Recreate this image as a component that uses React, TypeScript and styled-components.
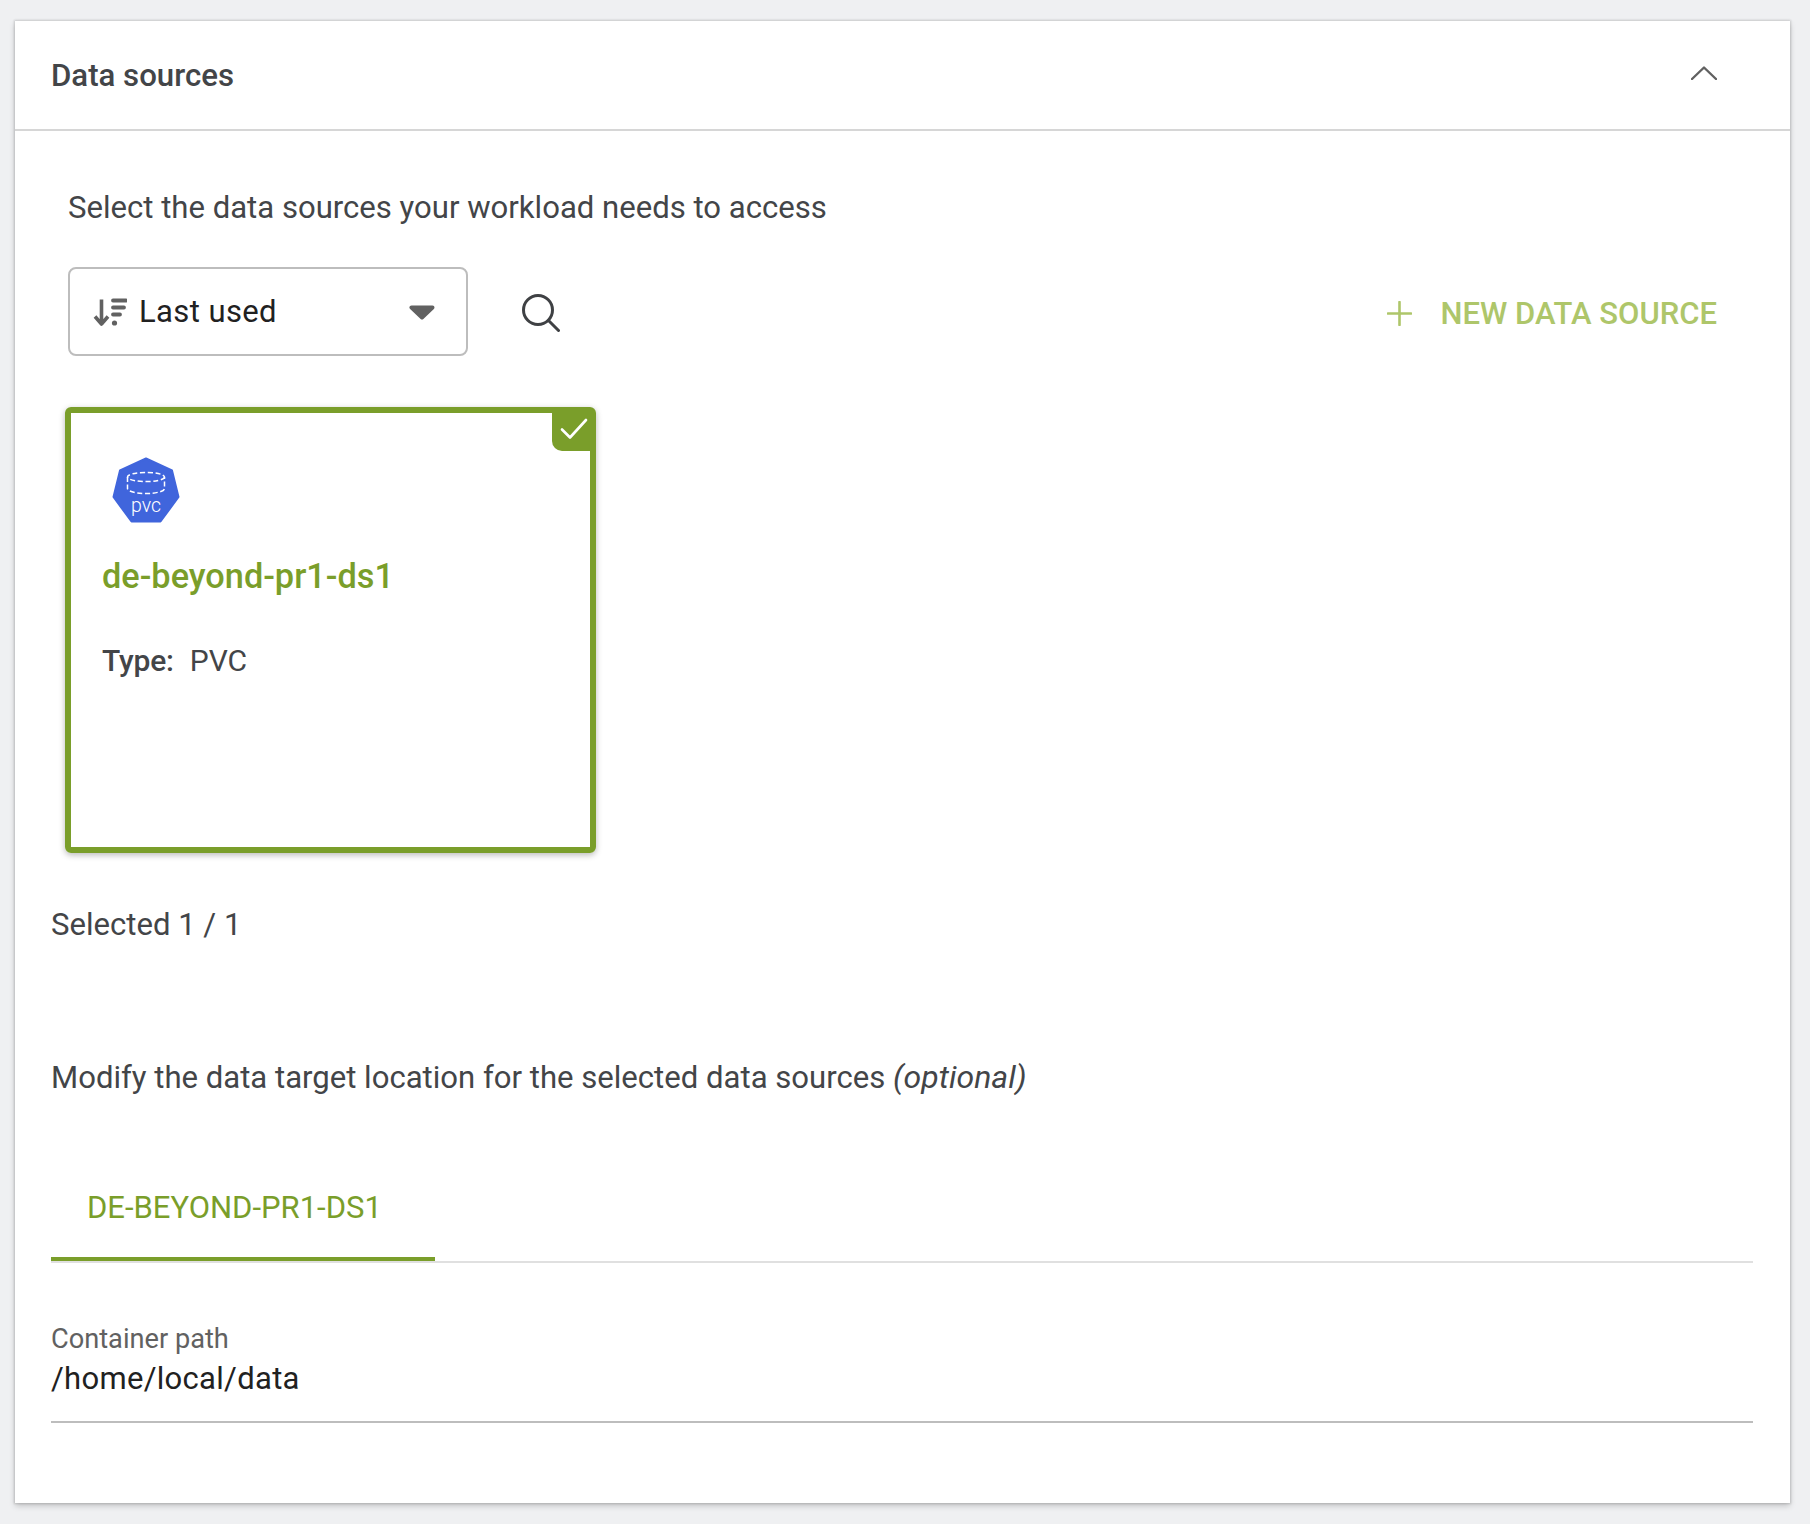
import styled, { createGlobalStyle } from "styled-components";

const green = "#7a9e2a";
const textColor = "#434548";

const GlobalStyle = createGlobalStyle`
  html, body {
    margin: 0;
    padding: 0;
    background: #eff0f2;
  }
  body {
    font-family: Roboto, "Liberation Sans", sans-serif;
    color: ${textColor};
  }
`;

const Panel = styled.section`
  margin: 21px 20px 21px 15px;
  background: #fff;
  box-shadow: 0 0 2px 1px rgba(0, 0, 0, 0.14), 0 3px 6px rgba(0, 0, 0, 0.18);
`;

const Header = styled.header`
  height: 108px;
  padding: 0 73px 0 36px;
  display: flex;
  align-items: center;
  justify-content: space-between;
  border-bottom: 2px solid #d6d6d6;
  svg {
    margin-bottom: 4px;
  }
`;

const Title = styled.h2`
  margin: 2px 0 0;
  font-size: 31.2px;
  line-height: 36px;
  font-weight: 500;
  color: ${textColor};
`;

const Body = styled.div`
  padding: 59px 37px 80px 36px;
`;

const Text = styled.p`
  margin: 0;
  font-size: 31.1px;
  line-height: 36px;
  font-weight: 400;
  color: ${textColor};
  em {
    font-style: italic;
    font-size: 32px;
    line-height: 0;
  }
`;

const Prompt = styled(Text)`
  margin-left: 17px;
`;

const Toolbar = styled.div`
  margin: 41px 36px 0 17px;
  height: 89px;
  display: flex;
  align-items: center;
`;

const SortSelect = styled.div`
  width: 400px;
  height: 89px;
  box-sizing: border-box;
  border: 2px solid #bdbdbd;
  border-radius: 8px;
  padding: 0 31px 0 23px;
  display: flex;
  align-items: center;
  font-size: 31px;
  letter-spacing: 0.4px;
  color: #212121;
  span {
    margin-left: 12px;
    flex: 1;
  }
  svg:last-child {
    margin-top: 2px;
  }
`;

const SearchButton = styled.button`
  margin: 2px 0 0 54px;
  padding: 0;
  border: none;
  background: transparent;
  display: flex;
`;

const NewSourceButton = styled.button`
  margin: 3px 0 0 auto;
  padding: 0;
  border: none;
  background: transparent;
  display: flex;
  align-items: center;
  gap: 29px;
  font-family: inherit;
  font-size: 31px;
  font-weight: 500;
  color: #aec66a;
  text-transform: uppercase;
`;

const Card = styled.article`
  position: relative;
  margin: 51px 0 0 14px;
  width: 531px;
  height: 446px;
  box-sizing: border-box;
  border: 6px solid ${green};
  border-radius: 6px;
  padding: 44px 0 0 31px;
  box-shadow: 0 2px 6px rgba(0, 0, 0, 0.28);
`;

const CheckBadge = styled.div`
  position: absolute;
  top: -6px;
  right: -6px;
  width: 44px;
  height: 44px;
  border-radius: 0 10px 0 10px;
  background: ${green};
  display: flex;
  align-items: center;
  justify-content: center;
`;

const CardIcon = styled.svg`
  display: block;
  margin-left: 10px;
`;

const CardName = styled.h3`
  margin: 33px 0 0;
  font-size: 34.3px;
  line-height: 40px;
  font-weight: 500;
  color: ${green};
`;

const CardMeta = styled(Text)`
  margin-top: 47px;
  font-size: 30px;
  b {
    font-weight: 500;
    margin-right: 16px;
    letter-spacing: -0.2px;
  }
`;

const SelectedCount = styled(Text)`
  margin-top: 54px;
`;

const TargetHint = styled(Text)`
  margin-top: 117px;
`;

const Tabs = styled.div`
  margin-top: 94px;
  display: flex;
  border-bottom: 2px solid #e0e0e0;
`;

const Tab = styled.div`
  width: 384px;
  box-sizing: border-box;
  padding: 0 0 31px 36px;
  border-bottom: 4px solid ${green};
  font-size: 31px;
  line-height: 36px;
  color: ${green};
  text-transform: uppercase;
`;

const Field = styled.div`
  margin-top: 60px;
  border-bottom: 2px solid #bdbdbd;
  padding-bottom: 24px;
`;

const FieldLabel = styled.label`
  display: block;
  font-size: 27.2px;
  line-height: 32px;
  color: #616161;
`;

const FieldValue = styled.div`
  margin-top: 6px;
  font-size: 31px;
  letter-spacing: 0.3px;
  line-height: 36px;
  color: #212121;
`;

const App = () => {
  return (
    <>
      <GlobalStyle />
      <Panel>
        <Header>
          <Title>Data sources</Title>
          <svg width="26" height="14" viewBox="0 0 26 14" fill="none">
            <path d="M1 13 13 1.5 25 13" stroke="#616161" strokeWidth="2.4" strokeLinecap="round" strokeLinejoin="round" />
          </svg>
        </Header>
        <Body>
          <Prompt>Select the data sources your workload needs to access</Prompt>
          <Toolbar>
            <SortSelect>
              <svg width="34" height="28" viewBox="0 0 34 28" fill="none">
                <path d="M8.5 1.5V25M2 18.5l6.5 7.5 6.5-7.5" stroke="#616161" strokeWidth="3.6" strokeLinejoin="round" />
                <path d="M20 2.5h13M20 9.5h11M20 16.5h7" stroke="#616161" strokeWidth="3.8" strokeLinecap="round" />
                <circle cx="21.5" cy="25" r="2.6" fill="#616161" />
              </svg>
              <span>Last used</span>
              <svg width="26" height="15" viewBox="0 0 26 15">
                <path d="M2.5 2.5h21L13 12.5z" fill="#616161" stroke="#616161" strokeWidth="4" strokeLinejoin="round" />
              </svg>
            </SortSelect>
            <SearchButton>
              <svg width="38" height="38" viewBox="0 0 38 38" fill="none">
                <circle cx="16" cy="16" r="14.5" stroke="#3f4144" strokeWidth="3" />
                <path d="m26.5 26.5 10 10" stroke="#3f4144" strokeWidth="3" strokeLinecap="round" />
              </svg>
            </SearchButton>
            <NewSourceButton>
              <svg width="25" height="25" viewBox="0 0 25 25" fill="none">
                <path d="M12.5 1v23M1 12.5h23" stroke="#aec66a" strokeWidth="2.6" strokeLinecap="round" />
              </svg>
              New data source
            </NewSourceButton>
          </Toolbar>
          <Card>
            <CheckBadge>
              <svg width="28" height="22" viewBox="0 0 28 22" fill="none">
                <path d="M2 11.5 10 19.5 26 2" stroke="#fff" strokeWidth="2.6" strokeLinecap="round" strokeLinejoin="round" />
              </svg>
            </CheckBadge>
            <CardIcon width="68" height="66" viewBox="0 0 68 66">
              <path d="M34 1.5 60 13.5 66.5 40 48.5 64.5H19.5L1.5 40 8 13.5Z" fill="#4065dc" stroke="#4065dc" strokeWidth="2" strokeLinejoin="round" />
              <g fill="none" stroke="#fff" strokeWidth="1.5" strokeDasharray="5 2.6">
                <ellipse cx="34" cy="20" rx="18.5" ry="4.6" />
                <path d="M15.5 20v11.5c0 2.8 8.3 5 18.5 5s18.5-2.2 18.5-5V20" />
              </g>
              <text x="34" y="55" textAnchor="middle" fill="#fff" fontSize="19.5" fontWeight="300" fontFamily="Roboto, sans-serif">pvc</text>
            </CardIcon>
            <CardName>de-beyond-pr1-ds1</CardName>
            <CardMeta>
              <b>Type:</b>PVC
            </CardMeta>
          </Card>
          <SelectedCount>Selected 1 / 1</SelectedCount>
          <TargetHint>
            Modify the data target location for the selected data sources <em>(optional)</em>
          </TargetHint>
          <Tabs>
            <Tab>de-beyond-pr1-ds1</Tab>
          </Tabs>
          <Field>
            <FieldLabel>Container path</FieldLabel>
            <FieldValue>/home/local/data</FieldValue>
          </Field>
        </Body>
      </Panel>
    </>
  );
};

export default App;
